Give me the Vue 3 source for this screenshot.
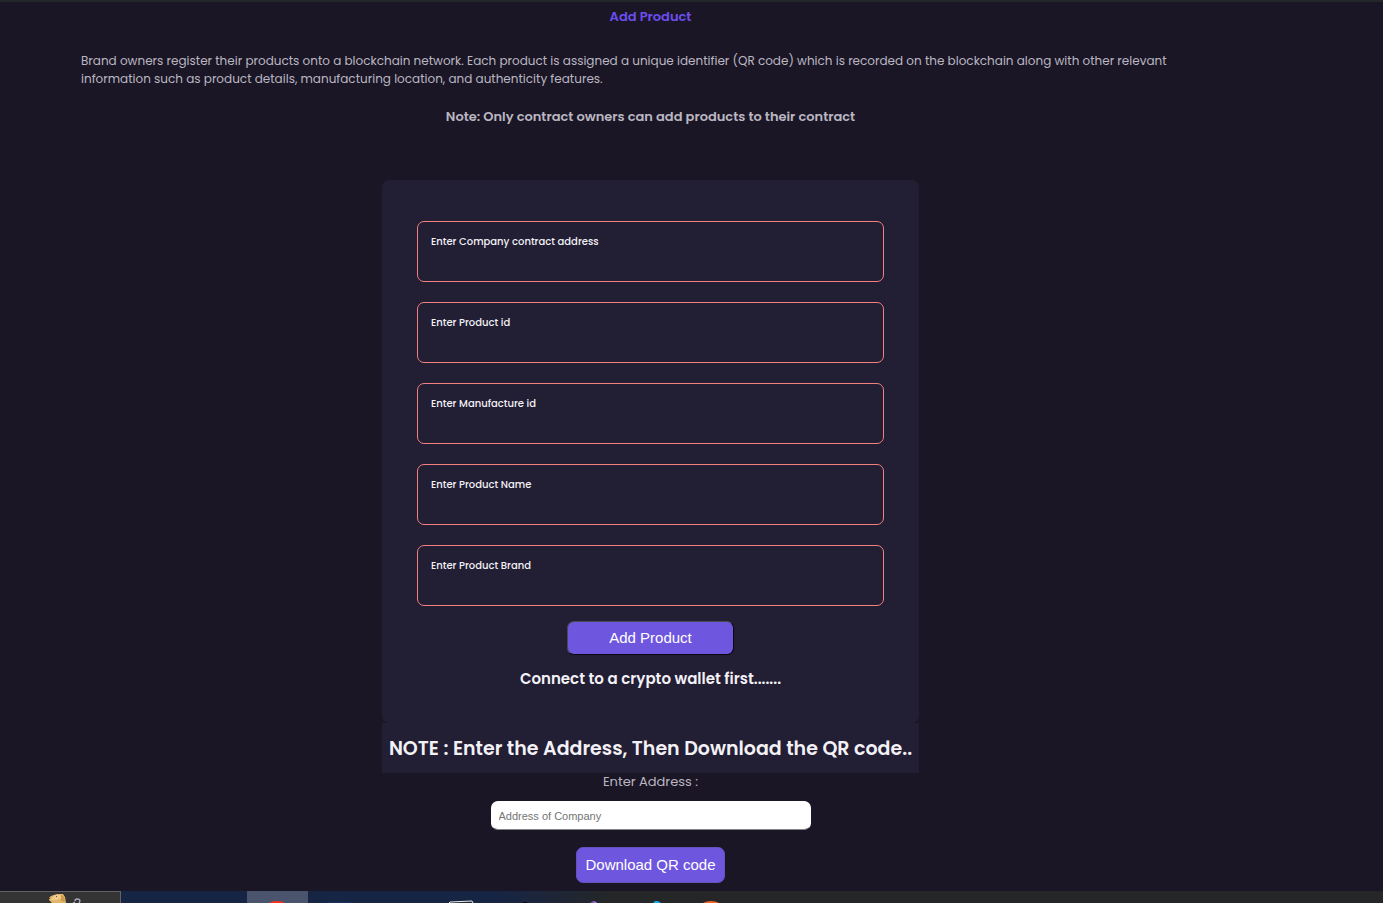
<script setup>
import { reactive, ref } from 'vue'

const fields = [
  { id: 'contract', label: 'Enter Company contract address' },
  { id: 'product-id', label: 'Enter Product id' },
  { id: 'manufacture-id', label: 'Enter Manufacture id' },
  { id: 'product-name', label: 'Enter Product Name' },
  { id: 'product-brand', label: 'Enter Product Brand' },
]
const values = reactive({})
const address = ref('')
</script>

<template>
  <div class="page">
    <main class="content">
      <h1 class="title">Add Product</h1>
      <p class="intro">
        Brand owners register their products onto a blockchain network. Each product is assigned a unique identifier (QR code) which is recorded on the blockchain along with other relevant information such as product details, manufacturing location, and authenticity features.
      </p>
      <p class="hint">Note: Only contract owners can add products to their contract</p>

      <div class="panel">
        <form class="card" @submit.prevent>
          <div v-for="f in fields" :key="f.id" class="field">
            <label :for="f.id">{{ f.label }}</label>
            <input :id="f.id" v-model="values[f.id]" type="text" />
          </div>
          <button class="btn add" type="submit">Add Product</button>
          <p class="status">Connect to a crypto wallet first.......</p>
        </form>
        <h2 class="note">NOTE : Enter the Address, Then Download the QR code..</h2>
      </div>

      <form class="download" @submit.prevent>
        <label for="address">Enter Address :</label>
        <input id="address" v-model="address" type="text" placeholder="Address of Company" />
        <button class="btn qr" type="submit">Download QR code</button>
      </form>
    </main>

    <footer class="taskbar">
      <div class="search">
        <svg width="120" height="11" viewBox="0 0 120 11" aria-hidden="true">
          <path d="M49 6 L51 4 L54 3 L57 2 H63 L65 5 L66 11 H52 L49 8Z" fill="#e2b568" />
          <path d="M54 3 L60 3 L62 6 L57 8 L51 8Z" fill="#efcc8b" />
          <path d="M61 3 L64 5 L65 10 L61 9Z" fill="#cf9a50" />
          <rect x="49" y="6" width="1" height="1" fill="#5a3820" />
          <rect x="56" y="4" width="1" height="1" fill="#6c4b2d" />
          <path d="M73 11 L75 10 M75 9 Q75 7 77 7 Q80 7 80 9 L79 11" fill="none" stroke="#aaaabd" stroke-width="1.3" />
        </svg>
      </div>
      <div class="apps">
        <span class="slot active">
          <svg width="61" height="12" viewBox="0 0 61 12" aria-hidden="true"><path d="M22 12 Q25 10 30 10 Q35 10 38 12Z" fill="#ff3018" /></svg>
        </span>
        <span class="slot">
          <svg width="61" height="12" viewBox="0 0 61 12" aria-hidden="true"><rect x="19" y="11" width="24" height="1" fill="#14325c" /></svg>
        </span>
        <span class="slot"></span>
        <span class="slot">
          <svg width="61" height="12" viewBox="0 0 61 12" aria-hidden="true"><path d="M19 12 L20 11 L42 10 L43 12" fill="#252b36" stroke="#eeeeea" stroke-width="1" /></svg>
        </span>
        <span class="slot">
          <svg width="61" height="12" viewBox="0 0 61 12" aria-hidden="true"><path d="M31 12 L33 11 H35 L37 12Z" fill="#05080e" /></svg>
        </span>
        <span class="slot">
          <svg width="61" height="12" viewBox="0 0 61 12" aria-hidden="true"><path d="M38 12 L41 10 H43 L45 12Z" fill="#8250b5" /><path d="M43 11 L45 12 H42Z" fill="#c197dc" /></svg>
        </span>
        <span class="slot">
          <svg width="61" height="12" viewBox="0 0 61 12" aria-hidden="true"><path d="M40 12 L42 10 H45 L48 12Z" fill="#16a6e5" /></svg>
        </span>
        <span class="slot">
          <svg width="61" height="12" viewBox="0 0 61 12" aria-hidden="true"><path d="M29 12 Q32 10 37 10 Q42 10 45 12Z" fill="#f4622d" /></svg>
        </span>
      </div>
    </footer>
  </div>
</template>

<style>
body {
  margin: 0;
  background: #1a1625;
}
</style>

<style scoped>
* {
  box-sizing: border-box;
}
.page {
  display: flex;
  flex-direction: column;
  min-height: 100vh;
  border-top: 2px solid #23272a;
  background: #1a1625;
  color: #bab7c2;
  font-family: Poppins, "Open Sans", sans-serif;
  font-size: 13px;
  line-height: 18px;
}
.content {
  flex: 1;
  display: flex;
  flex-direction: column;
  align-items: center;
  padding: 6px 163px 8px 81px;
}
.title,
.intro,
.hint,
.status,
.note {
  margin: 0;
}
.title {
  color: #6c4ef0;
  font-size: 13px;
  font-weight: 600;
}
.intro {
  width: 100%;
  margin-top: 26px;
  font-size: 12px;
}
.hint {
  margin-top: 20px;
  font-weight: 600;
}
.panel {
  width: 537px;
  max-width: 100%;
  margin-top: 54px;
  color: #f3f1f6;
}
.card {
  display: flex;
  flex-direction: column;
  align-items: center;
  padding: 41px 35px 35px;
  border-radius: 7px;
  background: #221e34;
}
.field {
  width: 100%;
  margin-bottom: 20px;
  padding: 11px 13px 9px;
  border: 1px solid #f47f80;
  border-radius: 7px;
}
.field label {
  display: block;
  font-size: 10px;
  font-weight: 500;
}
.field input {
  display: block;
  width: 100%;
  height: 21px;
  padding: 0;
  border: 0;
  outline: 0;
  background: transparent;
  color: inherit;
  font: inherit;
}
.btn {
  border-radius: 7px;
  background: #6e56df;
  color: #fff;
  font-family: "Liberation Sans", Arial, sans-serif;
  font-size: 15px;
  line-height: 18px;
}
.add {
  width: 167px;
  height: 34px;
  margin-top: -5px;
  border: 1px solid;
  border-color: #4b4a50 #08070c #08070c #4b4a50;
}
.status {
  margin-top: 15px;
  font-size: 15px;
  font-weight: 600;
}
.note {
  padding: 13px 0 11px;
  background: #221e34;
  font-size: 19px;
  line-height: 26px;
  font-weight: 600;
  text-align: center;
  white-space: nowrap;
}
.download {
  display: flex;
  flex-direction: column;
  align-items: center;
}
.download input {
  width: 320px;
  height: 29px;
  margin: 10px 0 17px;
  padding: 0 7px;
  border: 1px solid #fff;
  border-bottom-color: #858585;
  border-radius: 7px;
  background: #fff;
  color: #222;
  font-family: "Liberation Sans", Arial, sans-serif;
  font-size: 11px;
}
.download input::placeholder {
  color: #757575;
}
.qr {
  width: 149px;
  height: 36px;
  padding: 0;
  border: 1px solid #6652bd;
}
.taskbar {
  display: flex;
  height: 12px;
  overflow: hidden;
  background: linear-gradient(90deg, #172544 0, #172544 500px, #242628 610px);
}
.taskbar svg {
  display: block;
}
.search {
  width: 121px;
  border-top: 1px solid #636363;
  border-right: 1px solid #636363;
  background: #343434;
}
.apps {
  display: flex;
  margin-left: 126px;
}
.slot {
  width: 61px;
}
.active {
  background: #4a546d;
}
</style>
